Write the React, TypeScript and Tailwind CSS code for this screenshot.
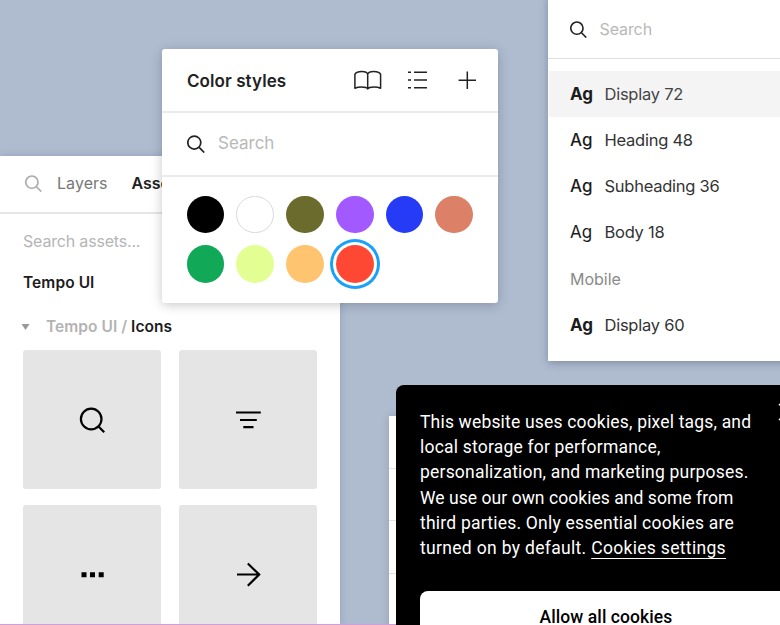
import React from "react";

type IconProps = { className?: string };

const SearchIcon = ({ className }: IconProps) => (
  <svg viewBox="0 0 18 18" fill="none" stroke="currentColor" strokeWidth="1.7" className={className}>
    <circle cx="7.3" cy="7.6" r="6.5" />
    <path d="M11.900 12.2 17.2 17.5" />
  </svg>
);

const BookIcon = () => (
  <svg viewBox="0 0 28 20" fill="none" stroke="currentColor" strokeWidth="1.5" strokeLinejoin="round" className="h-5 w-7">
    <path d="M13.700 4C13 2.100 11 1.400 8 1.400 4.800 1.400 1.500 2 .9 4.500V18.300C3 17.300 5 17 7.500 17 10.500 17 13 17.300 13.700 19 14.500 17.300 17 17 20 17 22.500 17 24.500 17.300 26.600 18.300V4.500C26 2 22.700 1.400 19.500 1.400 16.500 1.400 14.400 2.100 13.700 4ZV19" />
  </svg>
);

const ListIcon = () => (
  <svg viewBox="0 0 20 18" stroke="currentColor" strokeWidth="1.4" className="h-[18px] w-5">
    <path d="M0 1.200H3M6 1.200H19M0 9H3M6 9H19M0 16.800H3M6 16.800H19" />
  </svg>
);

const PlusIcon = () => (
  <svg viewBox="0 0 18 18" stroke="currentColor" strokeWidth="1.5" className="size-[18px]">
    <path d="M9.300 .5V17.900M.6 9.300H18" />
  </svg>
);

const GlassTile = () => (
  <svg viewBox="0 0 26 26" fill="none" stroke="currentColor" strokeWidth="2.2" className="size-[26px]">
    <circle cx="12.200" cy="12" r="10.300" />
    <path d="M19.300 19.300 25.200 25.200" />
  </svg>
);

const FilterTile = () => (
  <svg viewBox="0 0 26 20" stroke="currentColor" strokeWidth="2.200" className="h-5 w-[26px]">
    <path d="M1 2.500H25.800M5 10H21.800M8.300 17.200H18.500" />
  </svg>
);

const DotsTile = () => (
  <svg viewBox="0 0 24 6" fill="currentColor" className="h-1.5 w-6">
    <path d="M1.500 .2h5v5H1.500zM10 .2h5v5h-5zM18.700 .2h5v5h-5z" />
  </svg>
);

const ArrowTile = () => (
  <svg viewBox="0 0 26 26" fill="none" stroke="currentColor" strokeWidth="2.200" className="size-[26px]">
    <path d="M2 12.500H25M12.800 1.500 24.200 12.500 12.800 23.800" />
  </svg>
);

const tiles = [
  { name: "search", icon: <GlassTile /> },
  { name: "filter", icon: <FilterTile /> },
  { name: "more", icon: <DotsTile /> },
  { name: "arrow", icon: <ArrowTile /> },
];

function AssetsPanel() {
  return (
    <section className="absolute top-[156px] left-0 h-[469px] w-[340px] overflow-hidden bg-white shadow-[0_0_8px_rgba(40,60,90,0.22)]">
      <header className="flex h-[58px] items-center border-b-2 border-[#e6e6e6] pb-[2px] pl-[25px] text-[16px]">
        <SearchIcon className="size-[17px] text-[#a9a9a9]" />
        <span className="ml-[15px] tracking-[0.05px] text-[#777]">Layers</span>
        <span className="ml-6 font-semibold tracking-[-0.1px] text-[#222]">Assets</span>
      </header>
      <p className="mt-[15px] ml-[23px] text-[16px] leading-6 tracking-[-0.18px] text-[#b5b5b5]">Search assets...</p>
      <h2 className="mt-[18px] ml-[23px] text-[15.500px] leading-6 font-semibold tracking-[0.08px] text-[#1c1c1c]">Tempo UI</h2>
      <div className="mt-5 ml-[21px] flex h-6 items-center text-[15.500px] font-semibold tracking-[0.05px] text-[#b3b3b3]">
        <svg viewBox="0 0 9 6" className="mr-4 h-1.5 w-[9px] fill-[#999]">
          <path d="M.5 0h8L4.500 6z" />
        </svg>
        <span>Tempo UI /&nbsp;</span>
        <span className="text-[#1c1c1c]">Icons</span>
      </div>
      <div className="mt-[11px] ml-[23px] grid w-[294px] grid-cols-2 gap-x-[18px] gap-y-4">
        {tiles.map((t) => (
          <div key={t.name} className="flex h-[139px] items-center justify-center rounded-[3px] bg-[#e5e5e5] text-black">
            {t.icon}
          </div>
        ))}
      </div>
    </section>
  );
}

const swatches = [
  "bg-black",
  "bg-white border border-[#d9d9d9]",
  "bg-[#6b6b2d]",
  "bg-[#a259ff]",
  "bg-[#253bf6]",
  "bg-[#dc8068]",
  "bg-[#11a957]",
  "bg-[#e3ff94]",
  "bg-[#ffc46f]",
  "bg-[#ff4834] ring-3 ring-[#18a0fb] ring-offset-3 ring-offset-white",
];

function ColorPanel() {
  return (
    <section className="absolute top-[49px] left-[162px] h-[254px] w-[336px] rounded-[3px] bg-white shadow-[0_2px_12px_rgba(0,0,0,0.22)]">
      <header className="flex h-16 items-center border-b-2 border-[#ebebeb] pr-[22px] pl-[25px] text-[#222]">
        <h1 className="flex-1 pt-[3px] text-[17px] font-semibold tracking-[0.08px]">Color styles</h1>
        <BookIcon />
        <div className="ml-[26px] flex">
          <ListIcon />
        </div>
        <div className="ml-[30px] flex">
          <PlusIcon />
        </div>
      </header>
      <div className="flex h-16 items-center border-b-2 border-[#ebebeb] pl-[25px]">
        <SearchIcon className="size-[18px] text-[#222]" />
        <span className="ml-[13px] text-[17px] text-[#b8b8b8]">Search</span>
      </div>
      <div className="grid w-max grid-cols-6 gap-x-[12px] gap-y-[12px] pt-[18.500px] pl-[24.500px]">
        {swatches.map((s) => (
          <div key={s} className={"size-[37.800px] rounded-full " + s} />
        ))}
      </div>
    </section>
  );
}

const display = "font-bold pt-px";
const styles = [
  { label: "Display 72", weight: display, row: "bg-[#f4f4f4] text-[#444]" },
  { label: "Heading 48", weight: "font-medium pt-px", row: "text-[#333]" },
  { label: "Subheading 36", weight: "font-medium pt-px", row: "text-[#333]" },
  { label: "Body 18", weight: "font-normal pt-px", row: "text-[#333]" },
];

function StyleRow({ label, weight, row }: { label: string; weight: string; row: string }) {
  return (
    <div className={"ml-px flex h-[46.200px] items-center pl-[21.500px] " + row}>
      <span className={"w-[34.500px] text-[17px] text-[#1c1c1c] " + weight}>Ag</span>
      <span className="text-[16.500px] tracking-[-0.25px] whitespace-nowrap">{label}</span>
    </div>
  );
}

function TypePanel() {
  return (
    <section className="absolute -top-1 left-[547.500px] h-[364.500px] w-[260px] bg-white shadow-[0_2px_8px_rgba(40,50,80,0.35)]">
      <div className="flex h-[63px] items-center border-b border-[#dedede] pt-1 pl-[22.500px]">
        <SearchIcon className="size-[17px] text-[#222]" />
        <span className="ml-[12.500px] text-[16px] tracking-[-0.1px] text-[#b8b8b8]">Search</span>
      </div>
      <div className="pt-3">
        {styles.map((s) => (
          <StyleRow key={s.label} {...s} />
        ))}
        <div className="flex h-[46.200px] items-center pl-[22.500px] text-[16px] text-[#8a8a8a]">Mobile</div>
        <StyleRow label="Display 60" weight={display} row="text-[#333]" />
      </div>
    </section>
  );
}

function BackPanel() {
  return (
    <section className="absolute top-[416px] left-[388.500px] w-20 bg-white shadow-[0_0_8px_rgba(40,60,90,0.22)]">
      <div className="h-[53px] border-b border-[#e3e3e3]" />
      <div className="h-[52px] border-b border-[#e3e3e3]" />
      <div className="h-[53px] border-b border-[#e3e3e3]" />
      <div className="h-[60px]" />
    </section>
  );
}

function CookieBanner() {
  return (
    <section className="absolute top-[385px] left-[396px] h-[280px] w-[420px] rounded-[8px] bg-black pt-[25px] pl-6 font-[Roboto,sans-serif] text-white">
      <div className="text-[17.500px] leading-[25.200px] whitespace-nowrap">
        <p className="tracking-[0.18px]">This website uses cookies, pixel tags, and</p>
        <p className="tracking-[0.2px]">local storage for performance,</p>
        <p className="tracking-[0.2px]">personalization, and marketing purposes.</p>
        <p className="tracking-[0.05px]">We use our own cookies and some from</p>
        <p className="tracking-[0.22px]">third parties. Only essential cookies are</p>
        <p className="tracking-[0.32px]">
          turned on by default. <a className="underline decoration-1 underline-offset-4">Cookies settings</a>
        </p>
      </div>
      <button className="mt-[30px] block h-[52px] w-[372px] rounded-[8px] bg-white text-[17.500px] font-medium tracking-[0.08px] text-black">
        Allow all cookies
      </button>
      <svg viewBox="0 0 18 18" stroke="currentColor" strokeWidth="1.500" className="absolute top-[18px] left-[382px] size-[18px]">
        <path d="M1 1 17 17M17 1 1 17" />
      </svg>
    </section>
  );
}

export default function App() {
  return (
    <main className="relative h-[625px] w-[780px] overflow-hidden bg-[#afbcd0] font-[Inter,sans-serif]">
      <AssetsPanel />
      <TypePanel />
      <ColorPanel />
      <BackPanel />
      <div className="absolute bottom-0 left-0 h-px w-[396px] bg-[#cf9fdb]" />
      <CookieBanner />
    </main>
  );
}
